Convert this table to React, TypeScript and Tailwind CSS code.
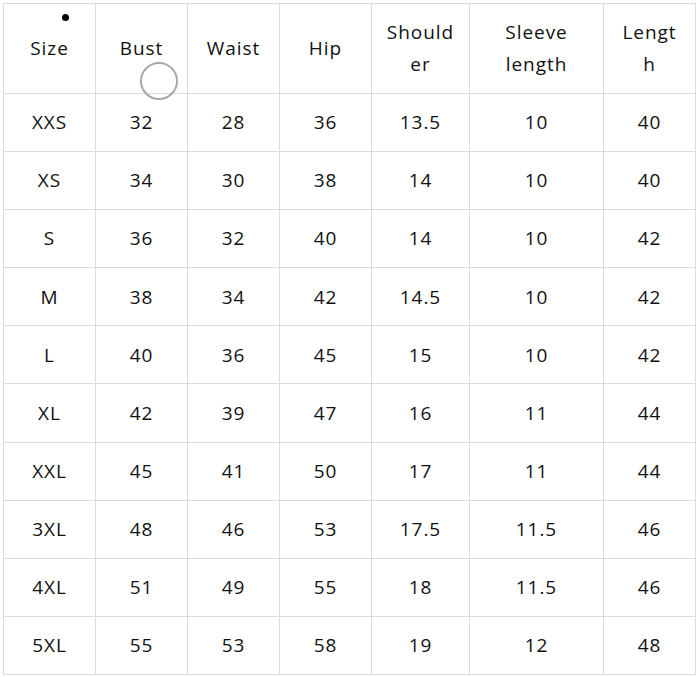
const headers: React.ReactNode[] = [
  "Size",
  "Bust",
  "Waist",
  "Hip",
  <>Should<br />er</>,
  <>Sleeve<br />length</>,
  <>Lengt<br />h</>,
];

const rows = [
  ["XXS", "32", "28", "36", "13.5", "10", "40"],
  ["XS", "34", "30", "38", "14", "10", "40"],
  ["S", "36", "32", "40", "14", "10", "42"],
  ["M", "38", "34", "42", "14.5", "10", "42"],
  ["L", "40", "36", "45", "15", "10", "42"],
  ["XL", "42", "39", "47", "16", "11", "44"],
  ["XXL", "45", "41", "50", "17", "11", "44"],
  ["3XL", "48", "46", "53", "17.5", "11.5", "46"],
  ["4XL", "51", "49", "55", "18", "11.5", "46"],
  ["5XL", "55", "53", "58", "19", "12", "48"],
];

export default function App() {
  return (
    <div className="relative min-h-[677px] w-[700px] bg-white pl-[3px] pt-[3px] font-['Open_Sans',sans-serif] text-[19px] tracking-[0.05em] text-[#111]">
      <div className="grid w-fit grid-cols-[92px_92px_92px_92px_98px_134px_92px] border-l border-t border-[#dcdcdc]">
        {headers.map((h, i) => (
          <div
            key={i}
            className="flex h-[90px] items-center justify-center whitespace-nowrap border-b border-r border-[#dcdcdc] pb-[2px] text-center leading-[32px]"
          >
            <span>{h}</span>
          </div>
        ))}
        {rows.map((r, ri) =>
          r.map((c, ci) => (
            <div
              key={ri + "-" + ci}
              className="flex h-[58.1px] items-center justify-center border-b border-r border-[#dcdcdc] text-center"
            >
              {c}
            </div>
          ))
        )}
      </div>

      {/* cursor marks */}
      <div className="absolute left-[62px] top-[14px] h-[7px] w-[7px] rounded-full bg-black" />
      <div className="absolute left-[140px] top-[62px] h-[38px] w-[38px] rounded-full border-2 border-[#a8a8a8]" />
    </div>
  );
}
